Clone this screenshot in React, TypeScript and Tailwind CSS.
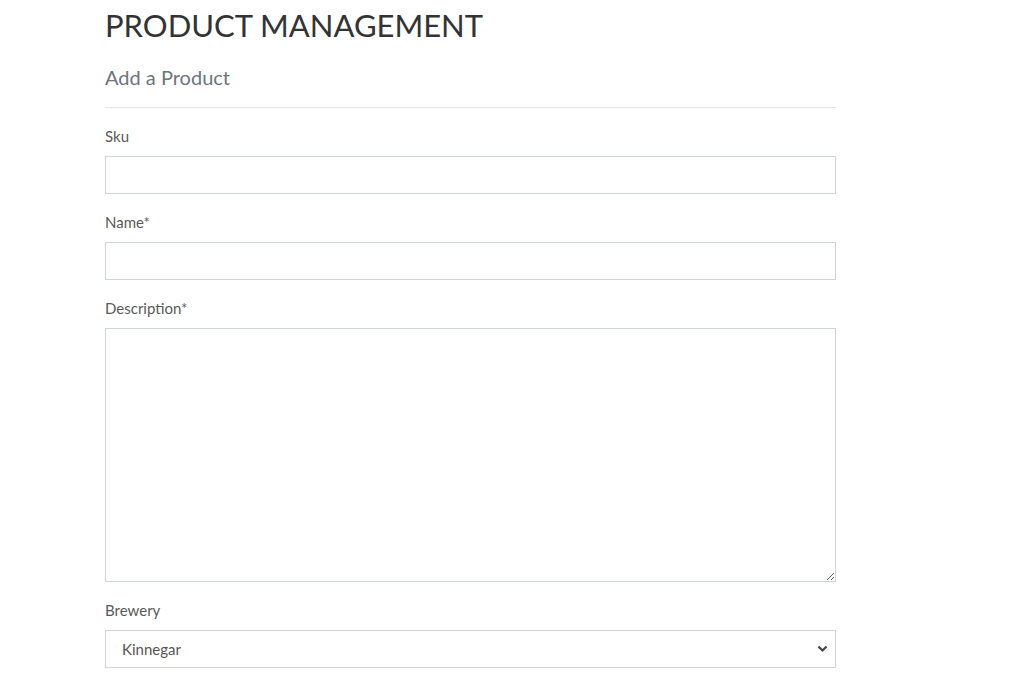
export default function App() {
  return (
    <div className="min-h-[685px] bg-white" style={{ fontFamily: "Lato, 'Open Sans', sans-serif" }}>
      <div className="w-[731px] ml-[105px] pt-[5px]">
        <h1 className="text-[31px] leading-[40px] text-[#333] font-normal">PRODUCT MANAGEMENT</h1>
        <h2 className="mt-[20px] text-[20px] leading-[24px] text-[#6c757d]">Add a Product</h2>
        <hr className="mt-[18px] border-t border-[#e5e5e5]" />
        <form className="mt-[18px]">
          <label className="block text-[15px] leading-[20px] text-[#5a5a5a]">Sku</label>
          <input className="mt-[10px] block w-full h-[38px] border border-[#ced4da] bg-white" />
          <label className="block mt-[18px] text-[15px] leading-[20px] text-[#5a5a5a]">Name*</label>
          <input className="mt-[10px] block w-full h-[38px] border border-[#ced4da] bg-white" />
          <label className="block mt-[18px] text-[15px] leading-[20px] text-[#5a5a5a]">Description*</label>
          <textarea className="mt-[10px] block w-full h-[254px] border border-[#ced4da] bg-white resize-y" />
          <label className="block mt-[18px] text-[15px] leading-[20px] text-[#5a5a5a]">Brewery</label>
          <div className="relative mt-[10px]">
            <select className="block w-full h-[38px] border border-[#ced4da] bg-white pl-[16px] text-[15px] text-[#555] appearance-none">
              <option>Kinnegar</option>
            </select>
            <svg className="absolute right-[8px] top-[15px]" width="11" height="8" viewBox="0 0 11 8">
              <path d="M1.5 1.5 L5.5 5.5 L9.5 1.5" fill="none" stroke="#444" strokeWidth="2.2" />
            </svg>
          </div>
        </form>
      </div>
    </div>
  );
}
